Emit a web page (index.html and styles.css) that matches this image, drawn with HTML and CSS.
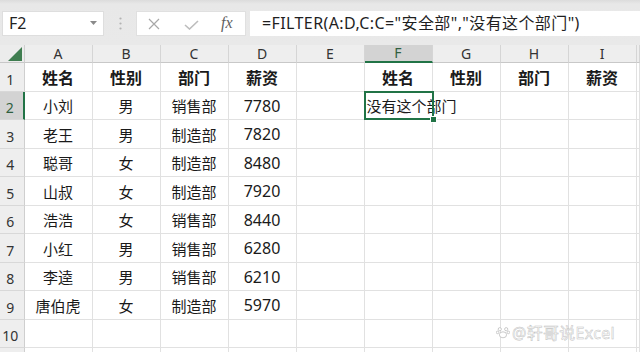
FILE: index.html
```html
<!DOCTYPE html>
<html lang="zh-CN">
<head>
<meta charset="utf-8">
<title>Excel FILTER</title>
<link rel="stylesheet" href="styles.css">
</head>
<body>
<div class="app">
  <div class="bar">
    <div class="namebox"><span class="ref">F2</span><svg class="dd" width="7" height="4" viewBox="0 0 7 4"><path d="M0 0 L7 0 L3.5 4 Z" fill="#8a8a8a"/></svg></div>
    <div class="grip"><svg width="3" height="13" viewBox="0 0 3 13"><circle cx="1.5" cy="1.5" r="1.1" fill="#b3b3b3"/><circle cx="1.5" cy="6.5" r="1.1" fill="#b3b3b3"/><circle cx="1.5" cy="11.5" r="1.1" fill="#b3b3b3"/></svg></div>
    <div class="fxbtns">
      <svg class="btn-x" width="12" height="12" viewBox="0 0 12 12"><path d="M1 1 L11 11 M11 1 L1 11" stroke="#a8a8a8" stroke-width="1.2" fill="none"/></svg>
      <svg class="btn-ok" width="15" height="10" viewBox="0 0 15 10"><path d="M1 5 L5.5 9 L14 1" stroke="#bdbdbd" stroke-width="1.6" fill="none"/></svg>
      <span class="fx">fx</span>
    </div>
    <div class="formula">=FILTER(A:D,C:C="安全部","没有这个部门")</div>
  </div>

  <div class="sheet">
    <div class="corner"><svg width="14" height="14" viewBox="0 0 14 14"><polygon points="14,0 14,14 0,14" fill="#3f7d50"/></svg></div>
    <div class="ch">A</div><div class="ch">B</div><div class="ch">C</div><div class="ch">D</div><div class="ch">E</div><div class="ch ch-sel">F</div><div class="ch">G</div><div class="ch">H</div><div class="ch">I</div><div class="ch"></div>

    <div class="rh">1</div><div class="c b">姓名</div><div class="c b">性别</div><div class="c b">部门</div><div class="c b">薪资</div><div class="c"></div><div class="c b">姓名</div><div class="c b">性别</div><div class="c b">部门</div><div class="c b">薪资</div><div class="c"></div>

    <div class="rh rh-sel">2</div><div class="c">小刘</div><div class="c">男</div><div class="c">销售部</div><div class="c n">7780</div><div class="c"></div><div class="c sel"><span class="over">没有这个部门</span><span class="handle"></span></div><div class="c"></div><div class="c"></div><div class="c"></div><div class="c"></div>

    <div class="rh">3</div><div class="c">老王</div><div class="c">男</div><div class="c">制造部</div><div class="c n">7820</div><div class="c"></div><div class="c"></div><div class="c"></div><div class="c"></div><div class="c"></div><div class="c"></div>

    <div class="rh">4</div><div class="c">聪哥</div><div class="c">女</div><div class="c">制造部</div><div class="c n">8480</div><div class="c"></div><div class="c"></div><div class="c"></div><div class="c"></div><div class="c"></div><div class="c"></div>

    <div class="rh">5</div><div class="c">山叔</div><div class="c">女</div><div class="c">制造部</div><div class="c n">7920</div><div class="c"></div><div class="c"></div><div class="c"></div><div class="c"></div><div class="c"></div><div class="c"></div>

    <div class="rh">6</div><div class="c">浩浩</div><div class="c">女</div><div class="c">销售部</div><div class="c n">8440</div><div class="c"></div><div class="c"></div><div class="c"></div><div class="c"></div><div class="c"></div><div class="c"></div>

    <div class="rh">7</div><div class="c">小红</div><div class="c">男</div><div class="c">销售部</div><div class="c n">6280</div><div class="c"></div><div class="c"></div><div class="c"></div><div class="c"></div><div class="c"></div><div class="c"></div>

    <div class="rh">8</div><div class="c">李逵</div><div class="c">男</div><div class="c">销售部</div><div class="c n">6210</div><div class="c"></div><div class="c"></div><div class="c"></div><div class="c"></div><div class="c"></div><div class="c"></div>

    <div class="rh">9</div><div class="c">唐伯虎</div><div class="c">女</div><div class="c">制造部</div><div class="c n">5970</div><div class="c"></div><div class="c"></div><div class="c"></div><div class="c"></div><div class="c"></div><div class="c"></div>

    <div class="rh">10</div><div class="c"></div><div class="c"></div><div class="c"></div><div class="c"></div><div class="c"></div><div class="c"></div><div class="c"></div><div class="c"></div><div class="c"></div><div class="c"></div>

    <div class="rh"></div><div class="c"></div><div class="c"></div><div class="c"></div><div class="c"></div><div class="c"></div><div class="c"></div><div class="c"></div><div class="c"></div><div class="c"></div><div class="c"></div>
  </div>

  <div class="watermark"><svg width="14" height="14" viewBox="0 0 14 14"><g fill="#fff" stroke="#bcbcbc" stroke-width="0.8"><ellipse cx="7" cy="9.8" rx="3.6" ry="3"/><circle cx="3.8" cy="4.2" r="1.6"/><circle cx="10.2" cy="4.2" r="1.6"/><circle cx="1.6" cy="7.4" r="1.3"/><circle cx="12.4" cy="7.4" r="1.3"/></g></svg><span>@轩哥说Excel</span></div>
</div>
</body>
</html>
```
FILE: styles.css
```css
html, body {
  margin: 0;
  padding: 0;
}
body {
  width: 640px;
  height: 352px;
  overflow: hidden;
  background: #ffffff;
  font-family: "Noto Sans", "Noto Sans CJK SC", sans-serif;
  color: #222;
}
.app {
  position: relative;
  width: 640px;
  height: 352px;
  overflow: hidden;
}
.bar {
  height: 45px;
  box-sizing: border-box;
  padding: 11px 0 9px 2px;
  display: flex;
  background: linear-gradient(#dcdcdc 0, #e8e8e8 4px, #e9e9e9 100%);
}
.namebox {
  width: 102px;
  height: 25px;
  box-sizing: border-box;
  background: #fff;
  border: 1px solid #dedede;
  display: flex;
  align-items: center;
  justify-content: space-between;
  padding: 0 6px 1px 6px;
  font-size: 16px;
  color: #222;
}
.namebox .ref {
  line-height: 1;
}
.grip {
  width: 32px;
  display: flex;
  align-items: center;
  justify-content: center;
  padding-left: 1px;
  box-sizing: border-box;
}
.fxbtns {
  width: 110px;
  height: 25px;
  background: #fff;
  border: 1px solid #e0e0e0;
  box-sizing: border-box;
  display: flex;
  align-items: center;
  padding-left: 11px;
}
.btn-x {
  margin-right: 24px;
}
.btn-ok {
  margin-top: 2px;
  margin-right: 22px;
}
.fx {
  font-family: "Liberation Serif", serif;
  font-style: italic;
  font-size: 16px;
  color: #5f5f5f;
  margin-top: -2px;
}
.formula {
  margin-left: 4px;
  flex: 1;
  height: 25px;
  background: #fff;
  box-sizing: border-box;
  padding-left: 12px;
  font-size: 16px;
  letter-spacing: 0.4px;
  line-height: 24px;
  white-space: nowrap;
  color: #1f1f1f;
}
.sheet {
  display: grid;
  grid-template-columns: 24.5px repeat(9, 68px) 1fr;
  grid-template-rows: 18px repeat(11, 28.5px);
  background: #fff;
}
.corner {
  background: #ececec;
  border-right: 1px solid #cfcfcf;
  border-bottom: 1px solid #c8c8c8;
  display: flex;
  align-items: flex-end;
  justify-content: flex-end;
  padding: 0 2px 1px 0;
}
.ch {
  background: #eeeeee;
  border-right: 1px solid #d5d5d5;
  border-bottom: 1px solid #c8c8c8;
  display: flex;
  align-items: center;
  justify-content: center;
  font-size: 14px;
  color: #333;
  line-height: 1;
}
.ch-sel {
  background: #d3d3d3;
  border-bottom: 2px solid #217346;
  color: #2f5f40;
}
.rh {
  background: #eeeeee;
  border-right: 1px solid #cfcfcf;
  border-bottom: 1px solid #d8d8d8;
  display: flex;
  align-items: flex-end;
  justify-content: center;
  padding: 0 3px 1px 0;
  font-size: 14px;
  color: #333;
  line-height: 20px;
}
.rh-sel {
  background: #d3d3d3;
  border-right: 2px solid #217346;
  color: #2f5f40;
}
.c {
  border-right: 1px solid #e1e1e1;
  border-bottom: 1px solid #e1e1e1;
  display: flex;
  align-items: center;
  justify-content: center;
  font-size: 15px;
  color: #1a1a1a;
  white-space: nowrap;
  padding-top: 1px;
}
.c.b {
  font-weight: 700;
  font-size: 16px;
}
.c.n {
  font-size: 16px;
}
.sel {
  position: relative;
  justify-content: flex-start;
  padding-left: 2px;
  overflow: visible;
}
.sel .over {
  position: relative;
  z-index: 1;
}
.sel::after {
  content: "";
  position: absolute;
  left: -1px;
  top: -1px;
  right: -2px;
  bottom: -1px;
  border: 2px solid #217346;
  z-index: 2;
}
.handle {
  position: absolute;
  right: -5px;
  bottom: -4px;
  width: 5px;
  height: 5px;
  background: #217346;
  border: 1px solid #fff;
  z-index: 3;
}
.watermark {
  position: absolute;
  left: 496px;
  top: 320px;
  display: flex;
  align-items: center;
  gap: 2px;
  font-size: 16px;
  letter-spacing: 0.3px;
  color: #ffffff;
  -webkit-text-stroke: 0.5px #c2c2c2;
  white-space: nowrap;
}
```
